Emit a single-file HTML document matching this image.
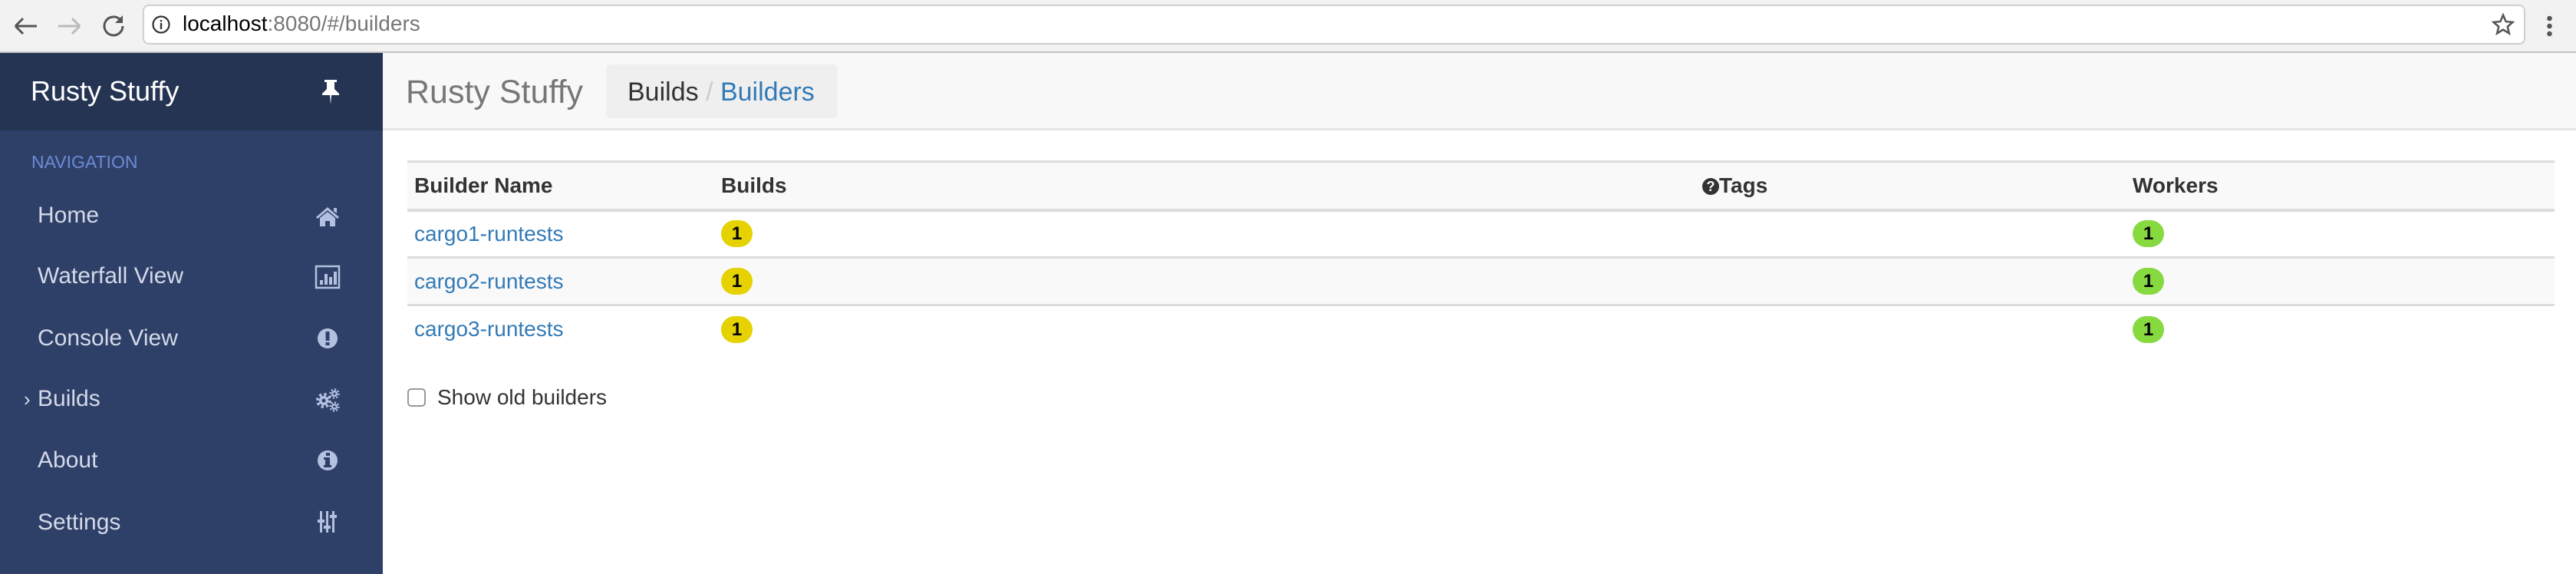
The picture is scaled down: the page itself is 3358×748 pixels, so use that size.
<!DOCTYPE html>
<html><head><meta charset="utf-8"><style>
*{margin:0;padding:0;box-sizing:border-box}
body{width:3358px;height:748px;overflow:hidden;font-family:"Liberation Sans",Arial,sans-serif;background:#fff;position:relative}
.abs{position:absolute}
#tb{left:0;top:0;width:3358px;height:69px;background:#f2f2f2;border-bottom:2px solid #c4c4c4}
#url{left:186px;top:6px;width:3106px;height:52px;background:#fff;border:2px solid #cfcfcf;border-radius:8px}
#sb{left:0;top:69px;width:499px;height:679px;background:#2f4068}
#sbh{left:0;top:69px;width:499px;height:101px;background:#263454}
.nav{position:absolute;left:49px;font-size:30px;color:#d3d9e8;line-height:36px}
.ic{position:absolute;left:410px;width:34px;height:34px}
#mh{left:499px;top:69px;width:2859px;height:101px;background:#f8f8f8;border-bottom:3px solid #e5e5e5}
#bc{left:790px;top:84px;width:302px;height:70px;background:#efefef;border-radius:6px}
table{position:absolute;left:531px;top:209px;width:2799px;border-collapse:collapse;font-size:28px}
th{height:63px;text-align:left;color:#333;font-weight:bold;border-top:3px solid #ddd;border-bottom:4px solid #ddd;background:#f9f9f9;padding-left:9px}
td{height:62px;border-bottom:3px solid #ddd;padding-left:9px;color:#337ab7}
tr.l td{border-bottom:none}
tr.s td{background:#f9f9f9}
.b{display:inline-block;width:41px;height:35px;border-radius:18px;text-align:center;line-height:35px;font-size:24px;font-weight:bold;color:#000;vertical-align:middle}
.y{background:#e6d200}.g{background:#86da40}
</style></head><body>
<div id="tb" class="abs"></div>
<svg class="abs" style="left:0;top:14px" width="180" height="40" viewBox="0 0 180 40">
<path d="M20 20h28M20 20l10-10M20 20l10 10" stroke="#555" stroke-width="3" fill="none"/>
<path d="M76 20h28M104 20l-10-10M104 20l-10 10" stroke="#bbb" stroke-width="3" fill="none"/>
<path d="M160 20a12 12 0 1 1-4-9" stroke="#555" stroke-width="3" fill="none"/>
<path d="M160 6v10h-10z" fill="#555"/>
</svg>
<div id="url" class="abs"></div>
<svg class="abs" style="left:197px;top:19px" width="26" height="26"><circle cx="13" cy="13" r="10.5" stroke="#333" stroke-width="2.2" fill="none"/><rect x="11.8" y="11" width="2.4" height="8" fill="#333"/><rect x="11.8" y="7" width="2.4" height="2.4" fill="#333"/></svg>
<div class="abs" style="left:238px;top:14px;font-size:28px;color:#000;line-height:34px">localhost<span style="color:#777">:8080/#/builders</span></div>
<svg class="abs" style="left:3248px;top:17px" width="30" height="30" viewBox="0 0 24 24"><path d="M12 2l2.9 6.9 7.1.6-5.4 4.7 1.7 7L12 17.3 5.7 21.2l1.7-7L2 9.5l7.1-.6z" fill="none" stroke="#555" stroke-width="2"/></svg>
<div class="abs" style="left:3320px;top:19px;width:7px;height:30px;background:radial-gradient(circle,#555 3px,transparent 3.5px) 0 0/7px 10px"></div>
<div id="sb" class="abs"></div>
<div id="sbh" class="abs"></div>
<div class="abs" style="left:40px;top:98px;color:#fff;font-size:36px;line-height:42px">Rusty Stuffy</div>
<svg class="abs" style="left:417px;top:102px" width="28" height="36" viewBox="0 0 28 36"><path d="M6 2h16v3h-3v9l6 6v2H3v-2l6-6V5H6z M13 22h2l-1 12z" fill="#fff"/></svg>
<div class="abs" style="left:41px;top:198px;color:#6b8bd6;font-size:23px;line-height:26px">NAVIGATION</div>
<div class="nav" style="top:263px">Home</div>
<div class="nav" style="top:342px">Waterfall View</div>
<div class="nav" style="top:423px">Console View</div>
<div class="nav" style="top:502px">Builds</div>
<div class="abs" style="left:31px;top:502px;color:#d3d9e8;font-size:26px;line-height:36px">›</div>
<div class="nav" style="top:582px">About</div>
<div class="nav" style="top:663px">Settings</div>
<svg class="ic" style="top:265px" viewBox="0 0 34 34"><path d="M2 18L17 5l15 13-2 2-13-11L4 20z M7 19l10-8 10 8v11h-7v-7h-6v7H7z M25 6h4v7l-4-3z" fill="#b3c1e0"/></svg>
<svg class="ic" style="top:344px" viewBox="0 0 34 34"><rect x="2" y="3" width="30" height="28" fill="none" stroke="#b3c1e0" stroke-width="2.5"/><path d="M7 21h4v6H7zM13 13h4v14h-4zM19 17h4v10h-4zM25 10h4v17h-4z" fill="#b3c1e0"/></svg>
<svg class="ic" style="top:424px" viewBox="0 0 34 34"><circle cx="17" cy="17" r="13" fill="#b3c1e0"/><rect x="14.5" y="8" width="5" height="12" fill="#2f4068"/><rect x="14.5" y="22" width="5" height="4" fill="#2f4068"/></svg>
<svg class="ic" style="top:504px" viewBox="0 0 34 34"><circle cx="12" cy="18" r="6" fill="#b3c1e0"/><circle cx="12" cy="18" r="8" fill="none" stroke="#b3c1e0" stroke-width="4" stroke-dasharray="3.2 3.1"/><circle cx="12" cy="18" r="2.5" fill="#2f4068"/><circle cx="26" cy="9" r="4" fill="#b3c1e0"/><circle cx="26" cy="9" r="5.5" fill="none" stroke="#b3c1e0" stroke-width="2.5" stroke-dasharray="2 2.3"/><circle cx="26" cy="9" r="1.6" fill="#2f4068"/><circle cx="26" cy="26" r="4" fill="#b3c1e0"/><circle cx="26" cy="26" r="5.5" fill="none" stroke="#b3c1e0" stroke-width="2.5" stroke-dasharray="2 2.3"/><circle cx="26" cy="26" r="1.6" fill="#2f4068"/></svg>
<svg class="ic" style="top:583px" viewBox="0 0 34 34"><circle cx="17" cy="17" r="13" fill="#b3c1e0"/><rect x="15" y="7" width="5" height="4" fill="#2f4068"/><path d="M12 13h8v10h2v3H12v-3h2v-7h-2z" fill="#2f4068"/></svg>
<svg class="ic" style="top:663px" viewBox="0 0 34 34"><path d="M7 3h3v28H7zM15 3h3v28h-3zM23 3h3v28h-3z" fill="#b3c1e0"/><path d="M4 14h9v4H4zM12 22h9v4h-9zM20 8h9v4h-9z" fill="#b3c1e0"/></svg>
<div id="mh" class="abs"></div>
<div class="abs" style="left:529px;top:95px;color:#777;font-size:43px;line-height:50px">Rusty Stuffy</div>
<div id="bc" class="abs"></div>
<div class="abs" style="left:818px;top:100px;font-size:34px;line-height:40px;color:#333">Builds <span style="color:#ccc">/</span> <span style="color:#337ab7">Builders</span></div>
<table>
<tr><th style="width:400px">Builder Name</th><th style="width:1279px">Builds</th><th style="width:561px"><span style="display:inline-block;width:22px;height:22px;border-radius:50%;background:#333;color:#f9f9f9;font-size:18px;text-align:center;line-height:22px;vertical-align:2px">?</span>Tags</th><th>Workers</th></tr>
<tr><td>cargo1-runtests</td><td><span class="b y">1</span></td><td></td><td><span class="b g">1</span></td></tr>
<tr class="s"><td>cargo2-runtests</td><td><span class="b y">1</span></td><td></td><td><span class="b g">1</span></td></tr>
<tr class="l"><td>cargo3-runtests</td><td><span class="b y">1</span></td><td></td><td><span class="b g">1</span></td></tr>
</table>
<div class="abs" style="left:531px;top:506px;width:24px;height:24px;border:2px solid #999;border-radius:5px;background:#fff"></div>
<div class="abs" style="left:570px;top:501px;font-size:28px;line-height:34px;color:#333">Show old builders</div>
</body></html>
